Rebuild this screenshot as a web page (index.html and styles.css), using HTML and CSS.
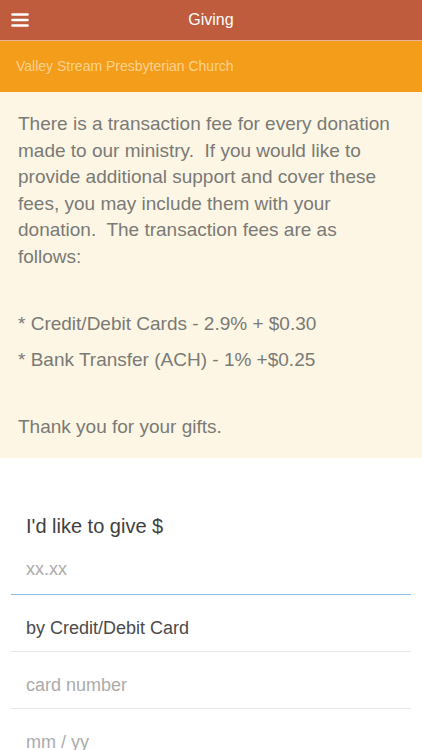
FILE: index.html
```html
<!DOCTYPE html>
<html lang="en">
<head>
<meta charset="UTF-8">
<meta name="viewport" content="width=device-width, initial-scale=1.0">
<title>Giving</title>
<link rel="stylesheet" href="styles.css">
</head>
<body>

<div class="topbar">
    <span class="menu-btn">
        <svg width="18" height="14" viewBox="0 0 18 14">
            <path d="M1.5 1.5h15M1.5 7h15M1.5 12.5h15" stroke="#fff" stroke-width="2.6" stroke-linecap="round"/>
        </svg>
    </span>
    <h1>Giving</h1>
</div>

<div class="church">Valley Stream Presbyterian Church</div>

<div class="notice">
    <p>There is a transaction fee for every donation made to our ministry.&nbsp; If you would like to provide additional support and cover these fees, you may include them with your donation.&nbsp; The transaction fees are as follows:</p>
    <p class="gap">* Credit/Debit Cards - 2.9% + $0.30</p>
    <p>* Bank Transfer (ACH) - 1% +$0.25</p>
    <p class="gap">Thank you for your gifts.</p>
</div>

<div class="give">
    <label class="give-label" for="amount">I'd like to give $</label>
    <div class="list">
        <div class="row amount">
            <input type="text" id="amount" placeholder="xx.xx">
        </div>
        <div class="row method">by Credit/Debit Card</div>
        <div class="row">
            <input type="text" placeholder="card number">
        </div>
        <div class="row">
            <input type="text" placeholder="mm / yy">
        </div>
    </div>
</div>

</body>
</html>
```

FILE: styles.css
```css
body {
    margin: 0;
    font-family: "Liberation Sans", Arial, sans-serif;
    background: #fff;
}
.topbar {
    position: relative;
    height: 40px;
    background: #bf5c3e;
    border-bottom: 1px solid #e9b39c;
    display: flex;
    align-items: center;
    justify-content: center;
}
.topbar h1 {
    margin: 0;
    font-size: 16px;
    font-weight: normal;
    color: #fff;
}
.menu-btn {
    position: absolute;
    left: 11px;
    top: 13px;
    line-height: 0;
}
.church {
    height: 51px;
    line-height: 51px;
    padding-left: 16px;
    background: #f39d1b;
    color: #fbd28c;
    font-size: 14px;
}
.notice {
    background: #fdf6e4;
    padding: 19px 18px 18px;
    color: #7a7a76;
    font-size: 19px;
    line-height: 26.6px;
}
.notice p {
    margin: 10px 0 0;
}
.notice p:first-child {
    margin-top: 0;
}
.notice p.gap {
    margin-top: 40px;
}
.give {
    padding-top: 56px;
}
.give-label {
    display: block;
    padding-left: 26px;
    font-size: 20px;
    line-height: 24px;
    color: #404040;
}
.list {
    margin: 0 11px;
}
.row {
    box-sizing: border-box;
    height: 57px;
    padding: 23px 15px 0;
    border-bottom: 1px solid #e8e8e8;
    font-size: 18px;
    line-height: 21px;
    color: #4a4a4a;
}
.row.amount {
    height: 57px;
    padding-top: 21px;
    border-bottom-color: #8fbde9;
}
.row input {
    display: block;
    width: 100%;
    padding: 0;
    border: 0;
    outline: none;
    background: transparent;
    font-family: inherit;
    font-size: 18px;
    line-height: 21px;
    height: 21px;
    color: #4a4a4a;
}
.row input::placeholder {
    color: #ababab;
}
```
